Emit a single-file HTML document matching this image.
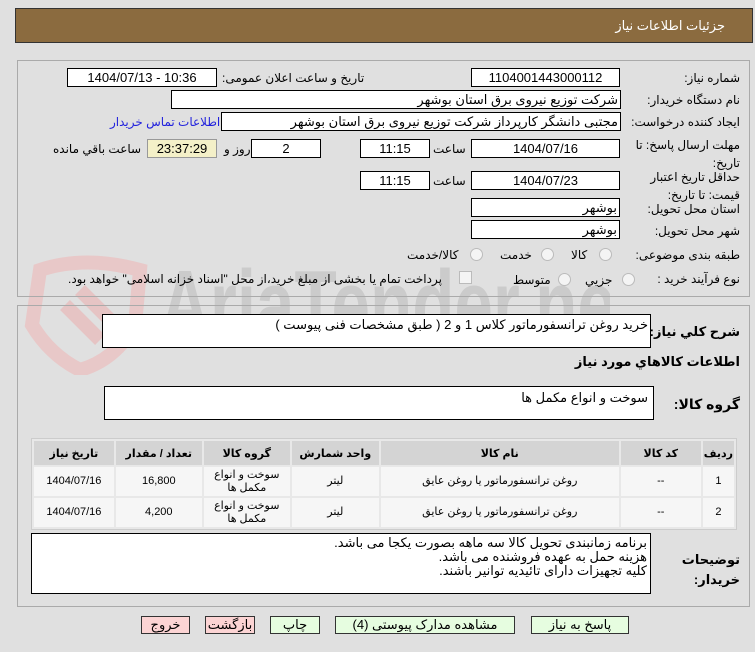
<!DOCTYPE html>
<html><head><meta charset="utf-8"><style>
body{margin:0;width:755px;height:652px;background:#e0e0e0;font-family:"Liberation Sans","DejaVu Sans",sans-serif;font-size:12px;color:#000;position:relative;overflow:hidden}
.a{position:absolute}
.box{position:absolute;background:#fff;border:1px solid #000;box-sizing:border-box;height:19px;line-height:17px;text-align:center;font-size:13px;overflow:hidden;white-space:nowrap}
.l{position:absolute;direction:rtl;white-space:nowrap;font-size:12px}
.r{text-align:right;padding-right:2px;direction:rtl}
.panel{position:absolute;border:1px solid #aaa;box-sizing:border-box}
table{border-collapse:separate;border-spacing:2px;position:absolute;left:31px;top:438px;width:706px;background:#e8e8e8;border:1px solid #ccc;font-size:11px;direction:rtl}
th{background:#d4d4d4;height:22px;font-weight:bold}
td{background:#f6f6f6;height:27px;text-align:center;line-height:13px}
.btn{position:absolute;top:616px;height:18px;border:1px solid #333;box-sizing:border-box;text-align:center;line-height:16px;font-size:13px;background:#e6fde0}
.pk{background:#fcd4d4}
.rad{position:absolute;width:11px;height:11px;border:1px solid #bbb;border-radius:50%;background:#f4f4f4}
</style></head><body>
<div class="a" style="left:15px;top:8px;width:738px;height:35px;background:#8b6b3f;border:1px solid #333;box-sizing:border-box"></div>
<div class="l" style="right:30px;top:18px;color:#fff;font-size:13px">جزئیات اطلاعات نیاز</div>

<!-- watermark -->
<svg class="a" style="left:20px;top:250px" width="130" height="125"><path d="M20 20 Q65 5 120 20 L115 75 Q95 110 60 120 Q30 105 12 75 Z" fill="none" stroke="#e8c8c8" stroke-width="14"/><path d="M45 55 L80 90 M60 40 L95 75" stroke="#e6c4c4" stroke-width="14"/></svg>
<div class="a" style="left:160px;top:255px;width:450px;height:100px;overflow:hidden"><div style="font-size:96px;font-weight:bold;color:#cbcbcb;line-height:100px;transform:scaleX(0.72);transform-origin:0 0;white-space:nowrap">AriaTender.net</div></div>

<div class="panel" style="left:17px;top:60px;width:733px;height:237px"></div>
<div class="panel" style="left:17px;top:305px;width:733px;height:302px"></div>

<div class="l" style="right:15px;top:71px">شماره نیاز:</div>
<div class="box" style="left:471px;top:68px;width:149px">1104001443000112</div>
<div class="l" style="left:222px;top:71px">تاریخ و ساعت اعلان عمومی:</div>
<div class="box" style="left:67px;top:68px;width:150px">1404/07/13 - 10:36</div>

<div class="l" style="right:15px;top:93px">نام دستگاه خریدار:</div>
<div class="box r" style="left:171px;top:90px;width:450px">شرکت توزیع نیروی برق استان بوشهر</div>

<div class="l" style="right:15px;top:115px">ایجاد کننده درخواست:</div>
<div class="box r" style="left:221px;top:112px;width:400px">مجتبی دانشگر کارپرداز شرکت توزیع نیروی برق استان بوشهر</div>
<div class="l" style="left:110px;top:115px;color:#2222dd">اطلاعات تماس خریدار</div>

<div class="l" style="right:15px;top:136px;line-height:18px;text-align:right">مهلت ارسال پاسخ: تا<br>تاریخ:</div>
<div class="box" style="left:471px;top:139px;width:149px">1404/07/16</div>
<div class="l" style="left:433px;top:142px">ساعت</div>
<div class="box" style="left:360px;top:139px;width:70px">11:15</div>
<div class="box" style="left:251px;top:139px;width:70px">2</div>
<div class="l" style="left:224px;top:142px">روز و</div>
<div class="box" style="left:147px;top:139px;width:70px;background:#f4f0c8;border-color:#999">23:37:29</div>
<div class="l" style="left:53px;top:142px">ساعت باقي مانده</div>

<div class="l" style="right:15px;top:168px;line-height:18px;text-align:right">حداقل تاریخ اعتبار<br>قیمت: تا تاریخ:</div>
<div class="box" style="left:471px;top:171px;width:149px">1404/07/23</div>
<div class="l" style="left:433px;top:174px">ساعت</div>
<div class="box" style="left:360px;top:171px;width:70px">11:15</div>

<div class="l" style="right:15px;top:202px">استان محل تحویل:</div>
<div class="box r" style="left:471px;top:198px;width:149px">بوشهر</div>
<div class="l" style="right:15px;top:224px">شهر محل تحویل:</div>
<div class="box r" style="left:471px;top:220px;width:149px">بوشهر</div>

<div class="l" style="right:15px;top:248px">طبقه بندی موضوعی:</div>
<div class="rad" style="left:599px;top:248px"></div><div class="l" style="left:571px;top:248px">کالا</div>
<div class="rad" style="left:541px;top:248px"></div><div class="l" style="left:500px;top:248px">خدمت</div>
<div class="rad" style="left:470px;top:248px"></div><div class="l" style="left:407px;top:248px">کالا/خدمت</div>

<div class="l" style="right:15px;top:272px">نوع فرآیند خرید :</div>
<div class="rad" style="left:622px;top:273px"></div><div class="l" style="left:585px;top:273px">جزیي</div>
<div class="rad" style="left:558px;top:273px"></div><div class="l" style="left:513px;top:273px">متوسط</div>
<div class="a" style="left:459px;top:271px;width:11px;height:11px;border:1px solid #bbb;background:#f4f4f4"></div>
<div class="l" style="left:68px;top:272px">پرداخت تمام یا بخشی از مبلغ خرید،از محل "اسناد خزانه اسلامی" خواهد بود.</div>

<div class="l" style="right:15px;top:324px;font-weight:bold;font-size:13px">شرح كلي نياز:</div>
<div class="box r" style="left:102px;top:314px;width:549px;height:34px;text-align:right;line-height:20px">خرید روغن ترانسفورماتور کلاس 1 و 2 ( طبق مشخصات فنی پیوست )</div>
<div class="l" style="right:15px;top:354px;font-weight:bold;font-size:13px">اطلاعات كالاهاي مورد نياز</div>
<div class="l" style="right:15px;top:396px;font-weight:bold;font-size:14px">گروه کالا:</div>
<div class="box r" style="left:104px;top:386px;width:550px;height:34px;text-align:right;line-height:22px;padding-right:5px">سوخت و انواع مکمل ها</div>

<table>
<tr><th style="width:25px">ردیف</th><th style="width:78px">کد کالا</th><th style="width:236px">نام کالا</th><th style="width:85px">واحد شمارش</th><th style="width:84px">گروه کالا</th><th style="width:84px">تعداد / مقدار</th><th>تاریخ نیاز</th></tr>
<tr><td>1</td><td>--</td><td>روغن ترانسفورماتور یا روغن عایق</td><td>لیتر</td><td>سوخت و انواع<br>مکمل ها</td><td>16,800</td><td>1404/07/16</td></tr>
<tr><td>2</td><td>--</td><td>روغن ترانسفورماتور یا روغن عایق</td><td>لیتر</td><td>سوخت و انواع<br>مکمل ها</td><td>4,200</td><td>1404/07/16</td></tr>
</table>

<div class="l" style="right:15px;top:550px;font-weight:bold;line-height:20px;text-align:right;font-size:13px">توضیحات<br>خریدار:</div>
<div class="box r" style="left:31px;top:533px;width:620px;height:61px;text-align:right;line-height:14px;padding-top:2px;padding-right:3px;white-space:normal">برنامه زمانبندی تحویل کالا سه ماهه بصورت یکجا می باشد.<br>هزینه حمل به عهده فروشنده می باشد.<br>کلیه تجهیزات دارای تائیدیه توانیر باشند.</div>

<div class="btn pk" style="left:141px;width:49px">خروج</div>
<div class="btn pk" style="left:205px;width:50px">بازگشت</div>
<div class="btn" style="left:270px;width:50px">چاپ</div>
<div class="btn" style="left:335px;width:180px">مشاهده مدارک پیوستی (4)</div>
<div class="btn" style="left:531px;width:98px">پاسخ به نیاز</div>
</body></html>
